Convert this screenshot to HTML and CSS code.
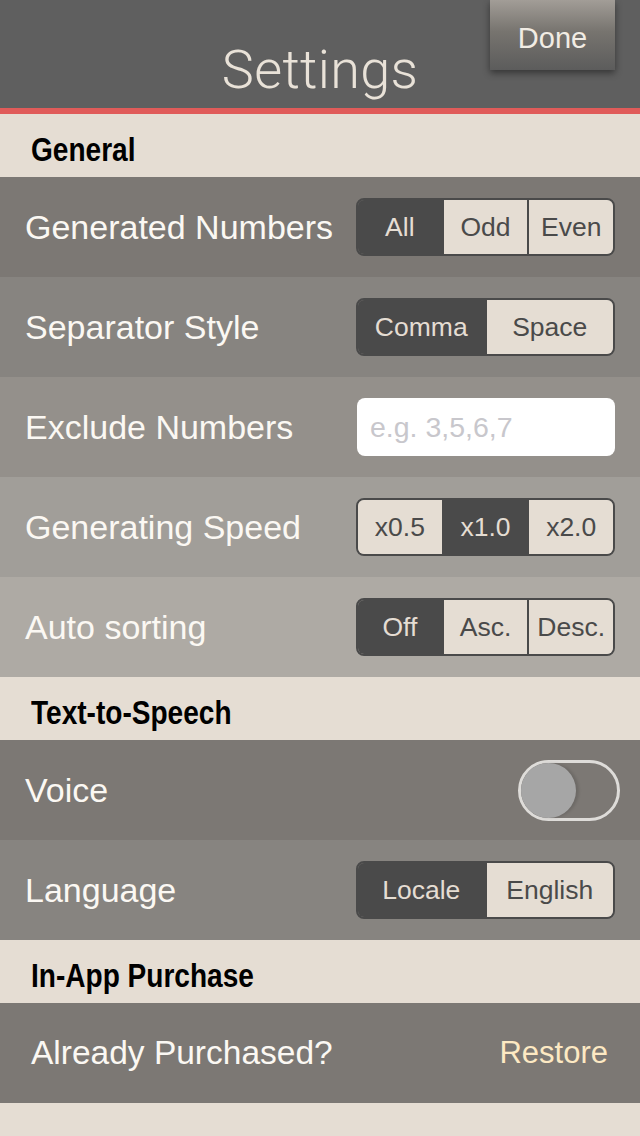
FILE: index.html
```html
<!DOCTYPE html>
<html lang="en">
<head>
<meta charset="utf-8">
<title>Settings</title>
<link rel="stylesheet" href="styles.css">
</head>
<body>
<div class="screen">
  <header class="nav">
    <div class="nav-spacer"></div>
    <h1 class="nav-title">Settings</h1>
    <div class="nav-right"><button class="done">Done</button></div>
  </header>

  <h2 class="section"><span class="section-text">General</span></h2>
  <div class="row row-1">
    <span class="label">Generated Numbers</span>
    <div class="seg">
      <span class="seg-item active">All</span>
      <span class="seg-item">Odd</span>
      <span class="seg-item">Even</span>
    </div>
  </div>
  <div class="row row-2">
    <span class="label">Separator Style</span>
    <div class="seg">
      <span class="seg-item active">Comma</span>
      <span class="seg-item">Space</span>
    </div>
  </div>
  <div class="row row-3">
    <span class="label">Exclude Numbers</span>
    <input class="field" type="text" placeholder="e.g. 3,5,6,7">
  </div>
  <div class="row row-4">
    <span class="label">Generating Speed</span>
    <div class="seg">
      <span class="seg-item">x0.5</span>
      <span class="seg-item active">x1.0</span>
      <span class="seg-item">x2.0</span>
    </div>
  </div>
  <div class="row row-5">
    <span class="label">Auto sorting</span>
    <div class="seg">
      <span class="seg-item active">Off</span>
      <span class="seg-item">Asc.</span>
      <span class="seg-item">Desc.</span>
    </div>
  </div>

  <h2 class="section"><span class="section-text">Text-to-Speech</span></h2>
  <div class="row row-1">
    <span class="label">Voice</span>
    <div class="switch"><span class="knob"></span></div>
  </div>
  <div class="row row-2">
    <span class="label">Language</span>
    <div class="seg">
      <span class="seg-item active">Locale</span>
      <span class="seg-item">English</span>
    </div>
  </div>

  <h2 class="section"><span class="section-text">In-App Purchase</span></h2>
  <div class="row row-1 row-purchase">
    <span class="label label-purchase">Already Purchased?</span>
    <span class="restore">Restore</span>
  </div>
</div>
</body>
</html>
```

FILE: styles.css
```css
html, body {
  margin: 0;
  padding: 0;
}
body {
  background: #e5ddd3;
  font-family: "Liberation Sans", Arial, sans-serif;
}
.screen {
  width: 640px;
  height: 1136px;
  background: #e5ddd3;
  overflow: hidden;
}
.nav {
  height: 108px;
  background: #5f5f5f;
  border-bottom: 6px solid #e05b59;
  display: grid;
  grid-template-columns: 1fr auto 1fr;
}
.nav-title {
  margin: 0;
  align-self: end;
  padding-bottom: 8px;
  font-family: Roboto, "Liberation Sans", sans-serif;
  font-weight: 300;
  font-size: 54px;
  line-height: 60px;
  color: #e9e2d8;
  letter-spacing: 0.3px;
}
.nav-right {
  display: flex;
  justify-content: flex-end;
  align-items: flex-start;
  padding-right: 25px;
}
.done {
  width: 125px;
  height: 70px;
  border: none;
  padding: 6px 0 0 0;
  margin: 0;
  background: linear-gradient(to bottom, #a29d97 0%, #77746f 45%, #5c5c5c 100%);
  box-shadow: 0 3px 7px rgba(0, 0, 0, 0.45);
  color: #f1ece4;
  font-family: "Liberation Sans", Arial, sans-serif;
  font-size: 29px;
}
.section {
  margin: 0;
  height: 63px;
  box-sizing: border-box;
  padding: 8px 0 0 31px;
  display: flex;
  align-items: center;
  font-family: "Liberation Sans", Arial, sans-serif;
  font-weight: 700;
  font-size: 34px;
  color: #000;
}
.section-text {
  display: inline-block;
  transform: scaleX(0.825);
  transform-origin: left center;
  white-space: nowrap;
}
.row {
  height: 100px;
  box-sizing: border-box;
  padding: 0 25px;
  display: flex;
  align-items: center;
  justify-content: space-between;
}
.row-1 { background: #7c7874; }
.row-2 { background: #878480; }
.row-3 { background: #94908b; }
.row-4 { background: #a19e99; }
.row-5 { background: #aeaaa4; }
.label {
  font-size: 34px;
  color: #fbf8f3;
}
.label-purchase {
  font-size: 33.5px;
}
.seg {
  width: 259px;
  height: 58px;
  box-sizing: border-box;
  border: 2px solid #4a4a4a;
  border-radius: 8px;
  overflow: hidden;
  display: flex;
}
.seg-item {
  flex: 1;
  display: flex;
  align-items: center;
  justify-content: center;
  background: #e5ddd3;
  color: #4a4a4a;
  font-size: 26.5px;
}
.seg-item + .seg-item {
  border-left: 2px solid #4a4a4a;
}
.seg-item.active {
  background: #4a4a4a;
  color: #e5ddd3;
}
.field {
  width: 258px;
  height: 58px;
  box-sizing: border-box;
  border: none;
  border-radius: 8px;
  background: #ffffff;
  padding: 0 13px;
  font-family: "Liberation Sans", Arial, sans-serif;
  font-size: 28.5px;
  color: #333;
  outline: none;
}
.field::placeholder {
  color: #c8c7cc;
}
.switch {
  width: 102px;
  height: 61px;
  box-sizing: border-box;
  margin-right: -5px;
  border: 3px solid #dedcd9;
  border-radius: 31px;
  display: flex;
  align-items: center;
}
.knob {
  width: 55px;
  height: 55px;
  border-radius: 50%;
  background: #a6a6a6;
  box-shadow: 3px 0 3px rgba(0, 0, 0, 0.12);
}
.row-purchase {
  padding: 0 32px 0 31px;
}
.restore {
  font-size: 31px;
  color: #fde9c3;
}
```
